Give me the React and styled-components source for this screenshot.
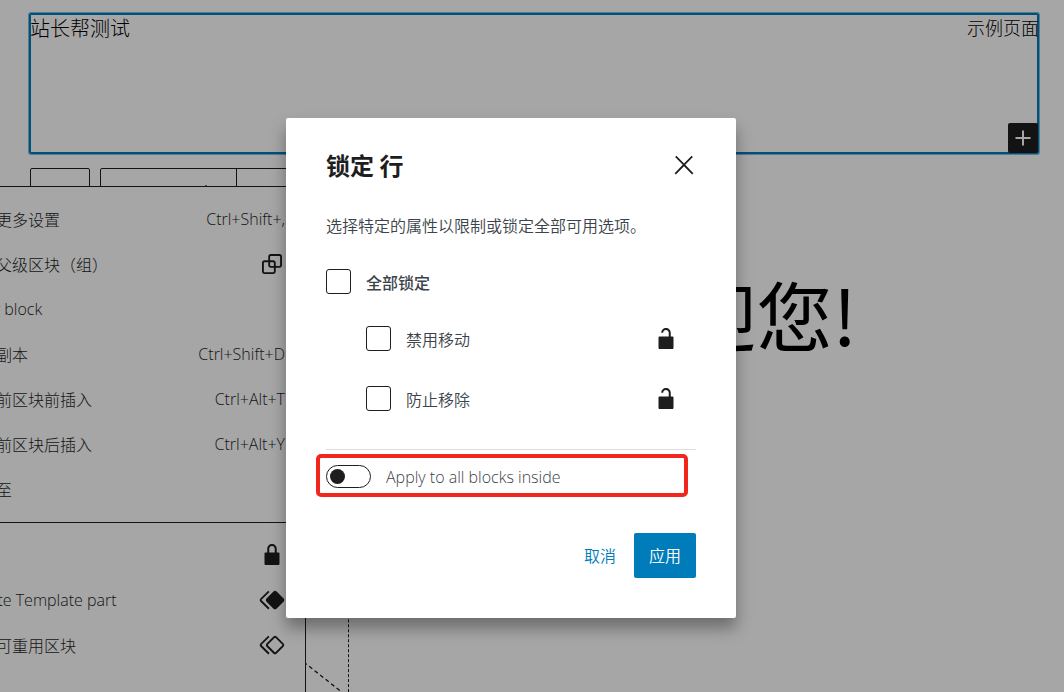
import React from "react";
import styled, { createGlobalStyle } from "styled-components";

const ink = "#1e1e1e";
const blue = "#007cba";
const cjk = `"Noto Sans CJK SC", sans-serif`;

const GlobalStyle = createGlobalStyle`
  *, *::before, *::after { box-sizing: border-box; }
  body { margin: 0; background: #fff; color: ${ink}; font: 16px/24px ${cjk}; }
  button, input { font: inherit; color: inherit; }
  h1, h2, p, ul { margin: 0; padding: 0; }
`;

const Page = styled.div`
  position: relative;
  display: flex;
  flex-direction: column;
  height: 100vh;
  overflow: hidden;
  padding: 13px 25px 0 29px;
`;

const SiteHeader = styled.header`
  position: relative;
  display: flex;
  flex: none;
  justify-content: space-between;
  height: 141px;
  padding: 0 0 0 1px;
  border-radius: 2px;
  box-shadow: inset 0 0 0 2px ${blue}, 0 0 0 1px rgba(0, 124, 186, 0.5);
  color: #000;
  font-weight: 300;
`;

const SiteTitle = styled.span`
  font-size: 20px;
  line-height: 30px;
`;

const NavLink = styled.a`
  color: inherit;
  font-size: 18px;
  line-height: 28px;
  text-decoration: none;
`;

const Inserter = styled.button`
  position: absolute;
  right: 1px;
  bottom: 1px;
  display: flex;
  width: 30px;
  height: 30px;
  padding: 0;
  border: 0;
  border-radius: 2px;
  background: ${ink};
  color: #fff;
`;

const Toolbar = styled.div`
  display: flex;
  flex: none;
  gap: 10px;
  height: 60px;
  margin: 14px 0 0 1px;
`;

const ToolGroup = styled.div`
  display: flex;
  border: 1px solid ${ink};
  border-radius: 2px;
`;

const Tool = styled.button`
  display: flex;
  justify-content: flex-end;
  align-items: flex-start;
  width: ${(p) => p.$width}px;
  padding: 15px 25px 0 0;
  border: 0;
  background: none;

  & + & { border-left: 1px solid ${ink}; }
`;

const Welcome = styled.h1`
  margin: 36px 182px 0 0;
  color: #000;
  font-size: 76px;
  font-weight: 400;
  line-height: 98px;
  text-align: right;
`;

const Placeholder = styled.div`
  flex: none;
  width: 320px;
  height: 252px;
  margin-top: 83px;
  border-right: 1px dashed ${ink};

  svg { display: block; }
`;

const Menu = styled.div`
  position: absolute;
  top: 186px;
  left: -56px;
  width: 362px;
  height: 560px;
  border: 1px solid ${ink};
  background: #fff;
  font-weight: 300;
`;

const MenuGroup = styled.div`
  padding: 9px 18px 11px 19px;

  & + & { border-top: 1px solid ${ink}; }
`;

const MenuItem = styled.button`
  display: flex;
  align-items: center;
  justify-content: space-between;
  width: 100%;
  height: 45px;
  padding: 0;
  border: 0;
  background: none;
  text-align: left;
`;

const Latin = styled.span`
  font-family: "Open Sans", ${cjk};
  line-height: 26px;
`;

const Shortcut = styled(Latin)`
  margin-left: auto;
  padding-right: 2px;
`;

const Overlay = styled.div`
  position: absolute;
  inset: 0;
  display: flex;
  align-items: flex-start;
  justify-content: center;
  padding: 118px 42px 0 0;
  background: rgba(0, 0, 0, 0.35);
`;

const Dialog = styled.section`
  width: 450px;
  padding: 24px 40px 40px;
  border-radius: 2px;
  background: #fff;
  box-shadow: 0 10px 16px rgba(0, 0, 0, 0.35);
  color: #3c434a;
  font-weight: 350;
`;

const DialogHeader = styled.div`
  display: flex;
  align-items: center;
  justify-content: space-between;
  height: 45px;
`;

const DialogTitle = styled.h2`
  color: ${ink};
  font-size: 24px;
  font-weight: 700;
  line-height: 32px;
`;

const CloseButton = styled.button`
  display: flex;
  width: 24px;
  height: 45px;
  align-items: center;
  justify-content: center;
  padding: 0;
  border: 0;
  background: none;
  color: ${ink};
`;

const Description = styled.p`
  margin: 26px 0 32px;
`;

const Option = styled.label`
  display: flex;
  align-items: center;
  gap: 15px;
  height: 25px;
  font-weight: ${(p) => (p.$strong ? 500 : 350)};
`;

const SubOptions = styled.ul`
  margin: 15px 0 20px;
  padding-left: 40px;
  list-style: none;
`;

const SubOption = styled.li`
  display: flex;
  align-items: center;
  justify-content: space-between;
  padding: 17px 15px 18px 0;
  height: 60px;

  svg { color: ${ink}; }
`;

const Checkbox = styled.input`
  appearance: none;
  width: 25px;
  height: 25px;
  margin: 0;
  border: 1px solid ${ink};
  border-radius: 3px;
  background: #fff;
`;

const InnerBlocks = styled.div`
  position: relative;
  padding-top: 15px;
  border-top: 1px solid #ddd;

  &::after {
    content: "";
    position: absolute;
    inset: 4px 8px -9px -10px;
    border: 4px solid #f1261c;
    border-radius: 5px;
    pointer-events: none;
  }
`;

const ToggleLabel = styled.label`
  display: flex;
  align-items: center;
  gap: 15px;
  height: 23px;
`;

const Toggle = styled.input`
  appearance: none;
  display: flex;
  align-items: center;
  width: 45px;
  height: 23px;
  margin: 0;
  padding: 0 3px;
  border: 1px solid ${ink};
  border-radius: 12px;

  &::before {
    content: "";
    width: 15px;
    height: 15px;
    border-radius: 50%;
    background: ${ink};
  }
`;

const Actions = styled.div`
  display: flex;
  justify-content: flex-end;
  gap: 3px;
  margin-top: 45px;
`;

const Button = styled.button`
  height: 45px;
  padding: 0 15px 2px;
  border: 0;
  border-radius: 2px;
  background: ${(p) => (p.$primary ? blue : "none")};
  color: ${(p) => (p.$primary ? "#fff" : blue)};
`;

const IconSvg = styled.svg`
  flex: none;
  fill: currentColor;
`;

const paths = {
  plus: "M18 11.2h-5.2V6h-1.6v5.2H6v1.6h5.2V18h1.6v-5.2H18z",
  close:
    "M13 11.8l6.1-6.3-1-1-6.1 6.2-6.1-6.2-1 1 6.1 6.3-6.5 6.7 1 1 6.5-6.6 6.5 6.6 1-1z",
  lock: "M17 10h-1.2V7c0-2.1-1.7-3.8-3.8-3.8-2.1 0-3.8 1.7-3.8 3.8v3H7c-.6 0-1 .4-1 1v8c0 .6.4 1 1 1h10c.6 0 1-.4 1-1v-8c0-.6-.4-1-1-1zm-2.8 0H9.8V7c0-1.2 1-2.2 2.2-2.2s2.2 1 2.2 2.2v3z",
  unlock:
    "M17 10h-1.2V7c0-2.1-1.7-3.8-3.8-3.8-2.1 0-3.8 1.7-3.8 3.8h1.5c0-1.2 1-2.2 2.2-2.2s2.3 1 2.3 2.2v3H7c-.6 0-1 .4-1 1v8c0 .6.4 1 1 1h10c.6 0 1-.4 1-1v-8c0-.6-.4-1-1-1z",
  group:
    "M18 4h-7c-1.1 0-2 .9-2 2v3H6c-1.1 0-2 .9-2 2v7c0 1.1.9 2 2 2h7c1.1 0 2-.9 2-2v-3h3c1.1 0 2-.9 2-2V6c0-1.1-.9-2-2-2zm-4.5 14c0 .3-.2.5-.5.5H6c-.3 0-.5-.2-.5-.5v-7c0-.3.2-.5.5-.5h3V13c0 1.1.9 2 2 2h2.5v3zm0-4.5H11c-.3 0-.5-.2-.5-.5v-2.5H13c.3 0 .5.2.5.5v2.5zm5-.5c0 .3-.2.5-.5.5h-3V11c0-1.1-.9-2-2-2h-2.5V6c0-.3.2-.5.5-.5h7c.3 0 .5.2.5.5v7z",
  symbol:
    "M21.3 10.8l-5.6-5.6c-.7-.7-1.8-.7-2.5 0l-5.6 5.6c-.7.7-.7 1.8 0 2.5l5.6 5.6c.3.3.8.5 1.2.5s.9-.2 1.2-.5l5.6-5.6c.8-.7.8-1.9.1-2.5zm-1 1.4l-5.6 5.6c-.1.1-.3.1-.4 0l-5.6-5.6c-.1-.1-.1-.3 0-.4l5.6-5.6s.1-.1.2-.1.1 0 .2.1l5.6 5.6c.1.1.1.3 0 .4zm-16.6-.4L10 5.5l-1-1-6.3 6.3c-.7.7-.7 1.8 0 2.5L9 19.5l1.1-1.1-6.3-6.3c-.2 0-.2-.2-.1-.3z",
  symbolFilled:
    "M21.3 10.8l-5.6-5.6c-.7-.7-1.8-.7-2.5 0l-5.6 5.6c-.7.7-.7 1.8 0 2.5l5.6 5.6c.3.3.8.5 1.2.5s.9-.2 1.2-.5l5.6-5.6c.8-.7.8-1.9.1-2.5zm-17.6 1L10 5.5l-1-1-6.3 6.3c-.7.7-.7 1.8 0 2.5L9 19.5l1.1-1.1-6.3-6.3c-.2 0-.2-.2-.1-.3z",
};

const Icon = ({ name }) => (
  <IconSvg width="30" height="30" viewBox="0 0 24 24" aria-hidden="true">
    <path d={paths[name]} />
  </IconSvg>
);

const blockItems = [
  { text: "显示更多设置", keys: "Ctrl+Shift+," },
  { text: "选择父级区块（组）", icon: "group" },
  { text: "Copy block", latin: true },
  { text: "创建副本", keys: "Ctrl+Shift+D" },
  { text: "在当前区块前插入", keys: "Ctrl+Alt+T" },
  { text: "在当前区块后插入", keys: "Ctrl+Alt+Y" },
  { text: "移动至" },
];

const templateItems = [
  { text: "锁定", icon: "lock" },
  { text: "Create Template part", latin: true, icon: "symbolFilled" },
  { text: "创建可重用区块", icon: "symbol" },
];

const MenuSection = ({ items }) => (
  <MenuGroup>
    {items.map((item) => (
      <MenuItem key={item.text} type="button">
        {item.latin ? <Latin>{item.text}</Latin> : <span>{item.text}</span>}
        {item.keys && <Shortcut>{item.keys}</Shortcut>}
        {item.icon && <Icon name={item.icon} />}
      </MenuItem>
    ))}
  </MenuGroup>
);

export default function App() {
  return (
    <Page>
      <GlobalStyle />
      <SiteHeader>
        <SiteTitle>站长帮测试</SiteTitle>
        <NavLink href="#">示例页面</NavLink>
        <Inserter type="button" aria-label="添加区块">
          <Icon name="plus" />
        </Inserter>
      </SiteHeader>
      <Toolbar>
        <ToolGroup>
          <Tool type="button" $width={58} aria-label="选择父级区块" />
        </ToolGroup>
        <ToolGroup>
          <Tool type="button" $width={135} aria-label="上移">
            <svg width="10" height="6" viewBox="0 0 10 6" fill="none" stroke="#777">
              <path d="M1 5l4-4 4 4" />
            </svg>
          </Tool>
          <Tool type="button" $width={120} aria-label="对齐" />
        </ToolGroup>
      </Toolbar>
      <Welcome>欢迎您!</Welcome>
      <Placeholder>
        <svg width="100%" height="100%" viewBox="0 0 319 252" aria-hidden="true">
          <path
            d="M0 0L319 252"
            stroke={ink}
            strokeWidth="1.3"
            strokeDasharray="4 3"
          />
        </svg>
      </Placeholder>

      <Menu>
        <MenuSection items={blockItems} />
        <MenuSection items={templateItems} />
      </Menu>

      <Overlay>
        <Dialog role="dialog" aria-labelledby="lock-title">
          <DialogHeader>
            <DialogTitle id="lock-title">锁定 行</DialogTitle>
            <CloseButton type="button" aria-label="关闭">
              <Icon name="close" />
            </CloseButton>
          </DialogHeader>
          <Description>选择特定的属性以限制或锁定全部可用选项。</Description>
          <Option $strong>
            <Checkbox type="checkbox" />
            全部锁定
          </Option>
          <SubOptions>
            {["禁用移动", "防止移除"].map((text) => (
              <SubOption key={text}>
                <Option>
                  <Checkbox type="checkbox" />
                  {text}
                </Option>
                <Icon name="unlock" />
              </SubOption>
            ))}
          </SubOptions>
          <InnerBlocks>
            <ToggleLabel>
              <Toggle type="checkbox" role="switch" />
              <Latin>Apply to all blocks inside</Latin>
            </ToggleLabel>
          </InnerBlocks>
          <Actions>
            <Button type="button">取消</Button>
            <Button type="button" $primary>
              应用
            </Button>
          </Actions>
        </Dialog>
      </Overlay>
    </Page>
  );
}
